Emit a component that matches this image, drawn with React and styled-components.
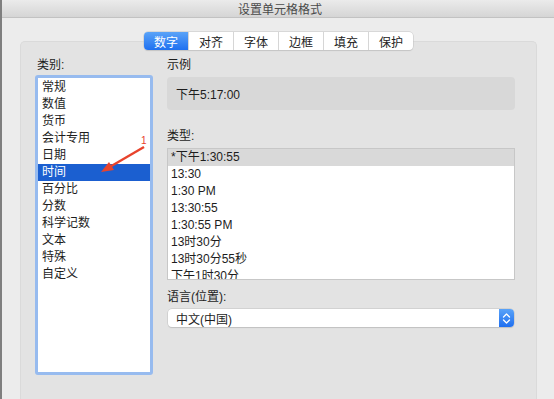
import React from "react";
import styled, { createGlobalStyle } from "styled-components";

const GlobalStyle = createGlobalStyle`
  html, body {
    margin: 0;
    padding: 0;
    background: #ececec;
  }
  body {
    font-family: "Liberation Sans", "Noto Sans CJK SC", sans-serif;
    font-size: 12px;
    color: #1d1d1d;
  }
`;

const Window = styled.div`
  position: relative;
  width: 554px;
  height: 399px;
  box-sizing: border-box;
  border-left: 2px solid #7f7f7f;
  background: #ececec;
  display: flex;
  flex-direction: column;
  overflow: hidden;
`;

const TitleBar = styled.div`
  height: 17px;
  flex-shrink: 0;
  display: flex;
  align-items: center;
  justify-content: center;
  background: linear-gradient(#ebebeb, #d5d5d5);
  border-bottom: 1px solid #c2c2c2;
  color: #4a4a4a;
  font-size: 12px;
  padding-left: 4px;
`;

const Body = styled.div`
  flex: 1;
  display: flex;
  flex-direction: column;
  padding: 14px 17px 0 18px;
`;

const TabBar = styled.div`
  align-self: center;
  display: flex;
  height: 18px;
  background: #fff;
  border-radius: 4px;
  box-shadow: 0 0 0 0.5px #c4c4c4, 0 1px 1px rgba(0, 0, 0, 0.12);
  position: relative;
  z-index: 1;
`;

const Tab = styled.div`
  width: 44px;
  display: flex;
  align-items: center;
  justify-content: center;
  font-size: 12px;
  color: ${(p) => (p.$active ? "#fff" : "#222")};
  background: ${(p) =>
    p.$active ? "linear-gradient(#5aa3f8, #1f70f0)" : "transparent"};
  border-radius: ${(p) => (p.$active ? "4px 0 0 4px" : "0")};
  & + & {
    border-left: 1px solid #d6d6d6;
  }
`;

const Panel = styled.div`
  flex: 1;
  margin-top: -9px;
  background: #e3e3e3;
  border: 1px solid #dadada;
  border-bottom: none;
  border-radius: 5px 5px 0 0;
  padding: 16px 21px 0 14px;
  display: flex;
  gap: 14px;
`;

const Column = styled.div`
  display: flex;
  flex-direction: column;
  width: ${(p) => p.$width}px;
`;

const Label = styled.div`
  height: 14px;
  line-height: 14px;
  font-size: 12px;
  margin-bottom: ${(p) => p.$gap ?? 5}px;
  padding-left: ${(p) => p.$indent ?? 0}px;
`;

const CategoryList = styled.div`
  height: 300px;
  box-sizing: border-box;
  background: #fff;
  border: 3px solid #97bbef;
  border-radius: 3px;
  padding-top: 1px;
`;

const CategoryItem = styled.div`
  height: 17px;
  line-height: 17px;
  padding-left: 4px;
  background: ${(p) => (p.$selected ? "#1b5fd0" : "transparent")};
  color: ${(p) => (p.$selected ? "#fff" : "#1d1d1d")};
`;

const SampleBox = styled.div`
  height: 33px;
  box-sizing: border-box;
  background: #d8d8d8;
  border-radius: 4px;
  padding-left: 9px;
  display: flex;
  align-items: center;
  margin-bottom: 19px;
`;

const TypeList = styled.div`
  height: 132px;
  box-sizing: border-box;
  background: #fff;
  border: 1px solid #c7c7c7;
  overflow: hidden;
  margin-bottom: 10px;
`;

const TypeItem = styled.div`
  height: 17px;
  line-height: 17px;
  padding-left: 3px;
  background: ${(p) => (p.$selected ? "#d9d9d9" : "transparent")};
  white-space: nowrap;
`;

const Select = styled.div`
  height: 18px;
  box-sizing: border-box;
  margin-left: 1px;
  margin-right: 1px;
  background: #fff;
  border-radius: 4px;
  box-shadow: 0 0 0 0.5px #c2c2c2, 0 1px 1px rgba(0, 0, 0, 0.15);
  display: flex;
  align-items: center;
  justify-content: space-between;
  padding-left: 8px;
`;

const Stepper = styled.div`
  width: 15px;
  height: 18px;
  border-radius: 0 4px 4px 0;
  background: linear-gradient(#5aa3f8, #1f6ff0);
  display: flex;
  align-items: center;
  justify-content: center;
`;

const Marker = styled.svg`
  position: absolute;
  left: 96px;
  top: 134px;
  overflow: visible;
`;

const categories = [
  "常规",
  "数值",
  "货币",
  "会计专用",
  "日期",
  "时间",
  "百分比",
  "分数",
  "科学记数",
  "文本",
  "特殊",
  "自定义",
];

const types = [
  "*下午1:30:55",
  "13:30",
  "1:30 PM",
  "13:30:55",
  "1:30:55 PM",
  "13时30分",
  "13时30分55秒",
  "下午1时30分",
];

const tabs = ["数字", "对齐", "字体", "边框", "填充", "保护"];

export default function App() {
  return (
    <>
      <GlobalStyle />
      <Window>
        <TitleBar>设置单元格格式</TitleBar>
        <Body>
          <TabBar>
            {tabs.map((t, i) => (
              <Tab key={t} $active={i === 0}>
                {t}
              </Tab>
            ))}
          </TabBar>
          <Panel>
            <Column $width={118}>
              <Label $indent={2} $gap={3}>
                类别:
              </Label>
              <CategoryList>
                {categories.map((c) => (
                  <CategoryItem key={c} $selected={c === "时间"}>
                    {c}
                  </CategoryItem>
                ))}
              </CategoryList>
            </Column>
            <Column $width={348}>
              <Label>示例</Label>
              <SampleBox>下午5:17:00</SampleBox>
              <Label>类型:</Label>
              <TypeList>
                {types.map((t, i) => (
                  <TypeItem key={t} $selected={i === 0}>
                    {t}
                  </TypeItem>
                ))}
              </TypeList>
              <Label>语言(位置):</Label>
              <Select>
                中文(中国)
                <Stepper>
                  <svg width="9" height="13" viewBox="0 0 9 13">
                    <path
                      d="M1.5 5 L4.5 2 L7.5 5 M1.5 8 L4.5 11 L7.5 8"
                      fill="none"
                      stroke="#fff"
                      strokeWidth="1.3"
                      strokeLinecap="round"
                      strokeLinejoin="round"
                    />
                  </svg>
                </Stepper>
              </Select>
            </Column>
          </Panel>
        </Body>
        <Marker width="52" height="42" viewBox="0 0 52 42">
          <text x="43" y="10" fill="#e8432c" fontSize="10" fontFamily="Liberation Sans, sans-serif">
            1
          </text>
          <path d="M46 13 L10 34" stroke="#e8432c" strokeWidth="2.4" fill="none" />
          <path d="M3 38 L11 28 L16 36 Z" fill="#e8432c" />
        </Marker>
      </Window>
    </>
  );
}
